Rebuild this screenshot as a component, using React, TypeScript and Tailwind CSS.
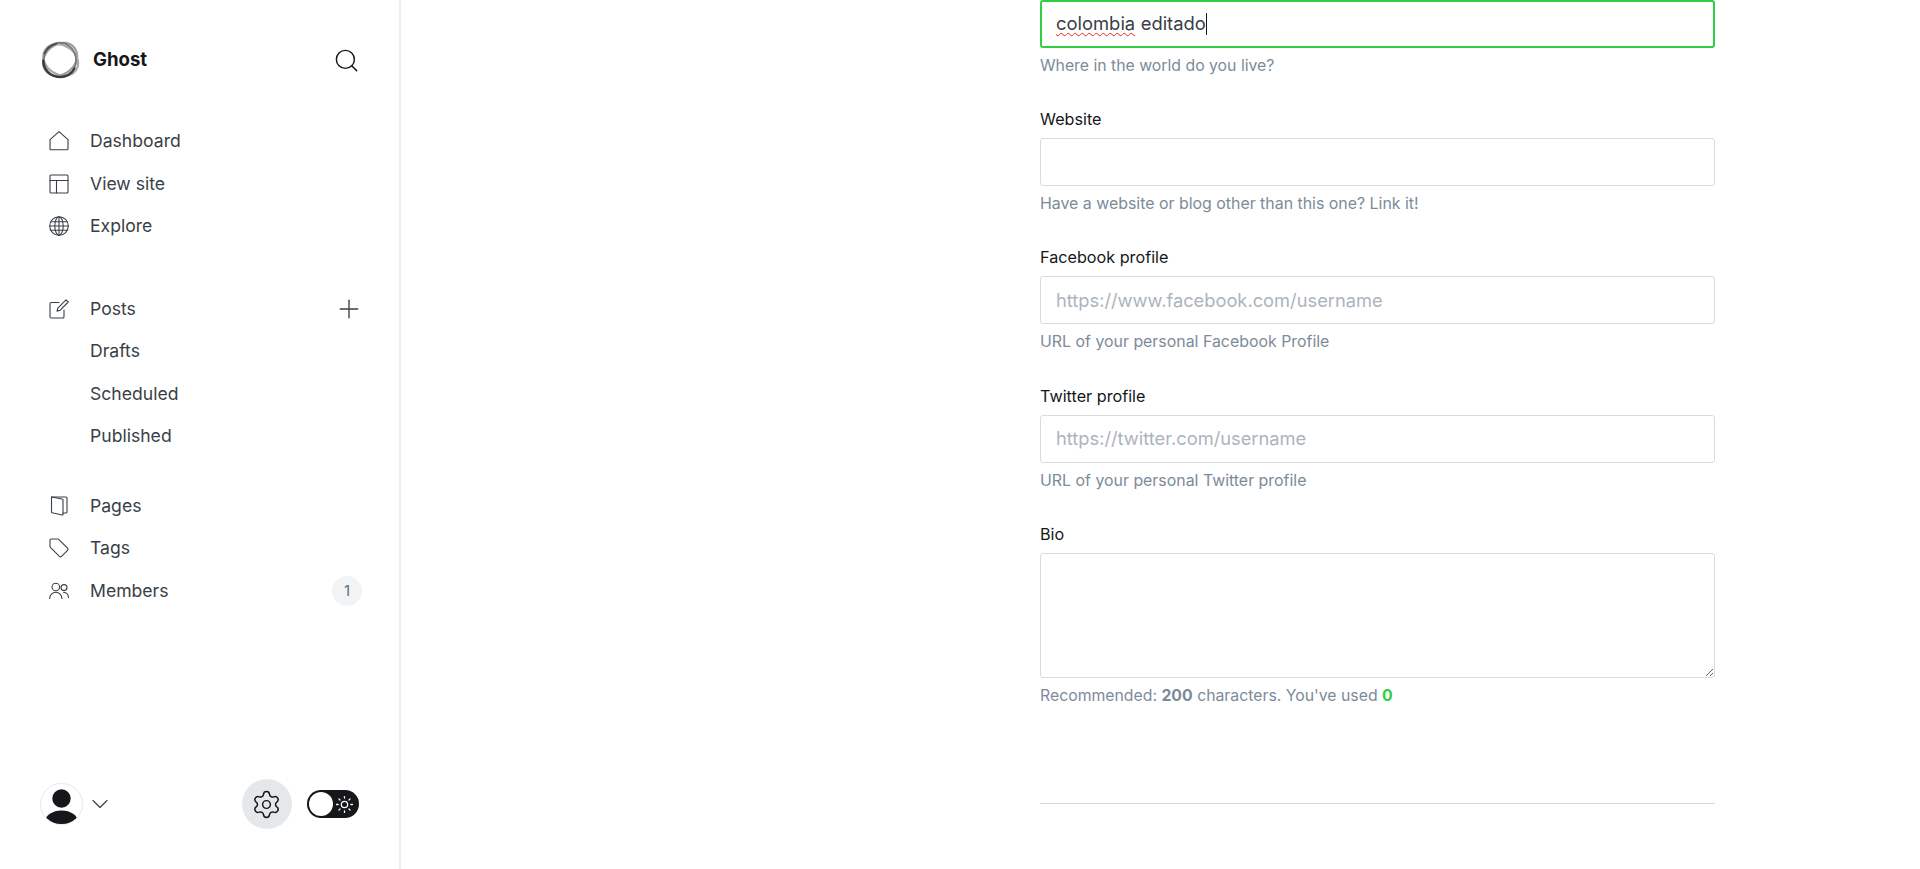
import { ChevronDown, Plus, Search, Settings, Sun } from 'lucide-react'
import type { ReactNode } from 'react'

const iconProps = {
  width: 20,
  height: 20,
  viewBox: '0 0 20 20',
  fill: 'none',
  stroke: '#394047',
  strokeWidth: 1.1,
  strokeLinejoin: 'round' as const,
  strokeLinecap: 'round' as const,
}

function HomeIcon() {
  return (
    <svg {...iconProps}>
      <path d="M1 8.6 10 .6l9 8v9.2a1 1 0 0 1-1 1H2a1 1 0 0 1-1-1z" />
    </svg>
  )
}

function LayoutIcon() {
  return (
    <svg {...iconProps}>
      <rect x="1" y="1" width="18" height="18" rx="1" />
      <path d="M1 6.5h18M7.5 6.5V19" />
    </svg>
  )
}

function GlobeIcon() {
  return (
    <svg {...iconProps}>
      <circle cx="10" cy="10" r="9.3" />
      <ellipse cx="10" cy="10" rx="4.2" ry="9.3" />
      <path d="M10 .7v18.6M.7 10h18.6M2 5.7h16M2 14.3h16" />
    </svg>
  )
}

function PostsIcon() {
  return (
    <svg {...iconProps}>
      <path d="M10 3.5H2.2A1.2 1.2 0 0 0 1 4.7v13.1A1.2 1.2 0 0 0 2.2 19h11.6a1.2 1.2 0 0 0 1.2-1.2V11" />
      <path d="M17 .9 19.2 3 11 11.3l-3 .8.8-3z" />
    </svg>
  )
}

function PagesIcon() {
  return (
    <svg {...iconProps}>
      <path d="M2.5 1H17a1 1 0 0 1 1 1v14a1 1 0 0 1-1 1h-3" />
      <path d="M2.5 1 13 3a1 1 0 0 1 1 1v14.4a.6.6 0 0 1-.8.6l-10-2.2a1 1 0 0 1-.7-1z" />
    </svg>
  )
}

function TagIcon() {
  return (
    <svg {...iconProps}>
      <path d="M1 2.2A1.2 1.2 0 0 1 2.2 1h6.3a2 2 0 0 1 1.4.6l8.6 8.6a1.5 1.5 0 0 1 0 2.1l-6 6a1.5 1.5 0 0 1-2.1 0L1.6 9.7A2 2 0 0 1 1 8.3z" />
    </svg>
  )
}

function MembersIcon() {
  return (
    <svg {...iconProps}>
      <circle cx="6.8" cy="6" r="3.8" />
      <path d="M.7 17.5c0-3.6 2.7-6.2 6.1-6.2s6.1 2.6 6.1 6.2" />
      <circle cx="15" cy="6.6" r="3" />
      <path d="M14.8 11.4c2.7 0 4.6 2.2 4.6 5.2" />
    </svg>
  )
}

function GhostLogo() {
  return (
    <svg width="40" height="40" viewBox="0 0 40 40" fill="none">
      <ellipse cx="20.5" cy="19.5" rx="18.4" ry="14.8" stroke="#9c9c9c" strokeWidth="2.2" transform="rotate(-40 20 20)" />
      <ellipse cx="20.5" cy="19.5" rx="18.4" ry="14.6" stroke="#aaaaaa" strokeWidth="2.2" transform="rotate(32 20 20)" />
      <ellipse cx="20" cy="20" rx="17.4" ry="16" stroke="#777777" strokeWidth="1.6" transform="rotate(80 20 20)" />
      <path d="M3.2 20.5c0 9.4 7.2 16.4 16.6 16.4 6.8 0 11.8-3.2 14.6-8.4" stroke="#383838" strokeWidth="2.2" strokeLinecap="round" />
      <path d="M4.4 13.4C6.8 8.2 11.4 5 16.4 3.8" stroke="#4a4a4a" strokeWidth="1.8" strokeLinecap="round" />
    </svg>
  )
}

function Avatar() {
  return (
    <div className="flex h-[42px] w-[43px] items-center justify-center overflow-hidden rounded-full border border-[#e6e9eb] bg-white">
      <svg width="41" height="41" viewBox="0 0 41 41">
        <circle cx="20.5" cy="14.5" r="9.2" fill="#15171a" />
        <ellipse cx="20.5" cy="38" rx="16.5" ry="11.5" fill="#15171a" />
      </svg>
    </div>
  )
}

function NavItem({ icon, label, right }: { icon?: ReactNode; label: string; right?: ReactNode }) {
  return (
    <div className="flex h-[42.5px] items-center pl-[49px] pr-[38px]">
      <span className="flex w-[41px] shrink-0">{icon}</span>
      <span className="flex-1 text-[17.6px] text-[#394047]">{label}</span>
      {right}
    </div>
  )
}

function Field({ label, hint, placeholder }: { label: string; hint: string; placeholder?: string }) {
  return (
    <div className="mt-[35.5px]">
      <label className="block h-[19px] text-[16.2px] leading-[17px] font-normal text-[#15171a]">{label}</label>
      <input
        placeholder={placeholder}
        className="mt-[8px] block h-[48px] w-full rounded-[3px] border border-[#dadbdd] bg-white px-[15px] pb-[1px] text-[18.3px] placeholder:text-[#abb4be]"
      />
      <p className="mt-[9px] h-[19px] text-[15.9px] leading-[18px] text-[#7c8b9a]">{hint}</p>
    </div>
  )
}

export default function App() {
  return (
    <div className="flex h-[869px] overflow-hidden bg-white font-['Inter',sans-serif]">
      <aside className="flex w-[401px] shrink-0 flex-col border-r-2 border-[#eceef0] pt-[40px]">
        <div className="flex h-[40px] items-center pl-[40px] pr-[39px]">
          <GhostLogo />
          <span className="ml-[13px] flex-1 text-[18.6px] font-bold text-[#15171a]">Ghost</span>
          <Search size={27} strokeWidth={1.3} className="text-[#15171a]" />
        </div>

        <nav className="mt-[40px]">
          <NavItem icon={<HomeIcon />} label="Dashboard" />
          <NavItem icon={<LayoutIcon />} label="View site" />
          <NavItem icon={<GlobeIcon />} label="Explore" />
        </nav>

        <nav className="mt-[40px]">
          <NavItem
            icon={<PostsIcon />}
            label="Posts"
            right={<Plus size={30} strokeWidth={1.1} className="-mr-[3px] text-[#394047]" />}
          />
          <NavItem label="Drafts" />
          <NavItem label="Scheduled" />
          <NavItem label="Published" />
        </nav>

        <nav className="mt-[27px]">
          <NavItem icon={<PagesIcon />} label="Pages" />
          <NavItem icon={<TagIcon />} label="Tags" />
          <NavItem
            icon={<MembersIcon />}
            label="Members"
            right={
              <span className="-mr-[1px] flex h-[30px] w-[30px] items-center justify-center rounded-full bg-[#f1f3f5] text-[15px] text-[#5d7079]">
                1
              </span>
            }
          />
        </nav>

        <div className="mt-auto mb-[40px] flex items-center pl-[40px] pr-[40px]">
          <Avatar />
          <ChevronDown size={28} strokeWidth={1} className="ml-[3px] text-[#394047]" />
          <div className="ml-auto flex h-[50px] w-[50px] items-center justify-center rounded-full bg-[#e5e8ea]">
            <Settings size={31} strokeWidth={1.15} className="-ml-[2px] text-[#15171a]" />
          </div>
          <div className="ml-[15px] flex h-[28px] w-[52px] items-center rounded-full bg-[#15171a] pl-[2px]">
            <span className="h-[24px] w-[24px] rounded-full bg-white" />
            <Sun size={19} strokeWidth={1.6} className="ml-[2px] text-white" />
          </div>
        </div>
      </aside>

      <main className="flex-1 pl-[639px]">
        <div className="w-[675px]">
          <div className="flex h-[48px] items-center rounded-[3px] border-2 border-[#30cf43] bg-white px-[14px] text-[18.4px] text-[#394047]">
            <span className="underline decoration-[#e5282c] decoration-wavy decoration-1 underline-offset-2">colombia</span>
            <span className="ml-[5.5px]">editado</span>
            <span className="h-[22px] w-px bg-[#15171a]" />
          </div>
          <p className="mt-[8px] h-[19px] text-[15.8px] leading-[19px] text-[#7c8b9a]">Where in the world do you live?</p>

          <Field label="Website" hint="Have a website or blog other than this one? Link it!" />
          <Field label="Facebook profile" placeholder="https://www.facebook.com/username" hint="URL of your personal Facebook Profile" />
          <Field label="Twitter profile" placeholder="https://twitter.com/username" hint="URL of your personal Twitter profile" />

          <div className="mt-[35.5px]">
            <label className="block h-[19px] text-[16.2px] leading-[17px] font-normal text-[#15171a]">Bio</label>
            <textarea className="mt-[8px] block h-[125px] w-full rounded-[3px] border border-[#dadbdd] bg-white" />
            <p className="mt-[8px] h-[19px] text-[15.8px] leading-[19px] text-[#7c8b9a]">
              Recommended: <b className="font-bold">200</b> characters. You've used{' '}
              <b className="font-bold text-[#30cf43]">0</b>
            </p>
          </div>

          <div className="mt-[98px] h-px bg-[#d5d7d9]" />
        </div>
      </main>
    </div>
  )
}
